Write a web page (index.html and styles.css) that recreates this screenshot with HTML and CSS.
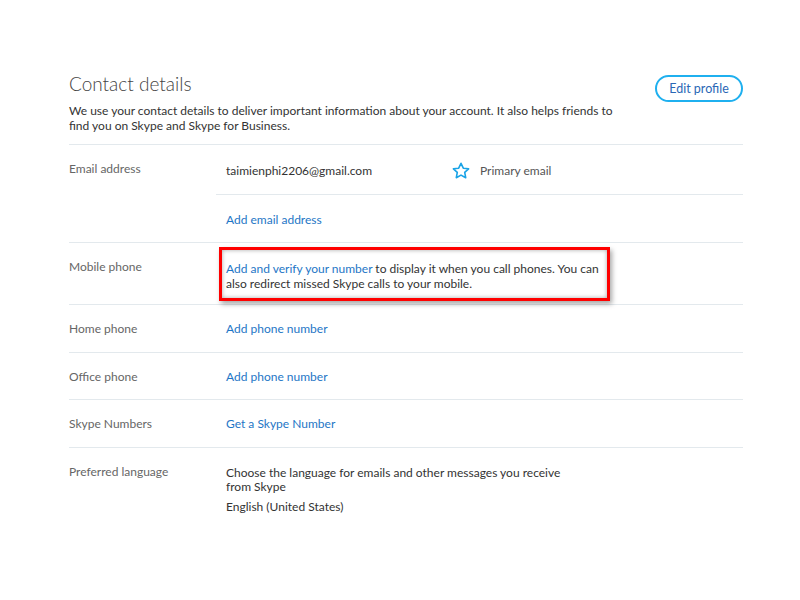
FILE: index.html
```html
<!DOCTYPE html>
<html>
<head>
<meta charset="utf-8">
<link rel="stylesheet" href="styles.css">
</head>
<body>
<main class="page">
  <header class="head">
    <div class="head-text">
      <h1 class="title">Contact details</h1>
      <p class="intro">We use your contact details to deliver important information about your account. It also helps friends to find you on Skype and Skype for Business.</p>
    </div>
    <button class="edit-btn">Edit profile</button>
  </header>

  <section class="row">
    <div class="label">Email address</div>
    <div class="values">
      <div class="sub email-line">
        <span class="email">taimienphi2206@gmail.com</span>
        <span class="primary">
          <svg class="star" width="18" height="17" viewBox="0 0 18 17"><path d="M9 1.3l2.3 4.9 5.3.6-3.9 3.6 1 5.3L9 13.1l-4.7 2.6 1-5.3-3.9-3.6 5.3-.6z" fill="none" stroke="#1aa3e6" stroke-width="1.6" stroke-linejoin="round"/></svg>
          Primary email
        </span>
      </div>
      <div class="sub sub-border"><a class="link">Add email address</a></div>
    </div>
  </section>

  <section class="row">
    <div class="label">Mobile phone</div>
    <div class="values">
      <div class="sub mobile">
        <div class="highlight"><a class="link">Add and verify your number</a> to display it when you call phones. You can also redirect missed Skype calls to your mobile.</div>
      </div>
    </div>
  </section>

  <section class="row">
    <div class="label">Home phone</div>
    <div class="values"><div class="sub"><a class="link">Add phone number</a></div></div>
  </section>

  <section class="row">
    <div class="label">Office phone</div>
    <div class="values"><div class="sub sub-short"><a class="link">Add phone number</a></div></div>
  </section>

  <section class="row">
    <div class="label">Skype Numbers</div>
    <div class="values"><div class="sub"><a class="link">Get a Skype Number</a></div></div>
  </section>

  <section class="row">
    <div class="label">Preferred language</div>
    <div class="values">
      <div class="sub lang">
        <p class="lang-desc">Choose the language for emails and other messages you receive from Skype</p>
        <p class="lang-value">English (United States)</p>
      </div>
    </div>
  </section>
</main>
</body>
</html>
```

FILE: styles.css
```css
* { box-sizing: border-box; }
html, body { margin: 0; padding: 0; background: #fff; }
body {
  font-family: Lato, "Open Sans", sans-serif;
  font-size: 12px;
  color: #333;
}
.page {
  width: 674px;
  margin-left: 69px;
  padding-top: 70px;
}
.head {
  display: flex;
  justify-content: space-between;
  align-items: flex-start;
  padding-bottom: 11px;
}
.title {
  margin: 0;
  padding-top: 1px;
  font-size: 19px;
  font-weight: 300;
  line-height: 26px;
  color: #444;
}
.intro {
  margin: 6px 0 0;
  width: 560px;
  line-height: 15px;
  color: #333;
}
.edit-btn {
  margin-top: 5px;
  width: 88px;
  height: 27px;
  border: 2px solid #1fb0ef;
  border-radius: 14px;
  background: #fff;
  font-family: inherit;
  font-size: 12.5px;
  color: #2a67b5;
  padding: 0;
}
.row {
  display: flex;
  border-top: 1px solid #e3e9ed;
}
.label {
  width: 147px;
  flex: none;
  padding-top: 16px;
  line-height: 16px;
  color: #666;
}
.values { flex: 1; }
.sub {
  padding: 16px 0 15px 10px;
  line-height: 16px;
}
.sub-short { padding-bottom: 14px; }
.sub-border { border-top: 1px solid #e3e9ed; }
.sub-border.sub { padding-top: 17px; padding-bottom: 14px; }
.email-line {
  display: flex;
  align-items: center;
  padding-top: 17px;
  padding-bottom: 15px;
}
.email { width: 226px; color: #333; }
.primary {
  display: flex;
  align-items: center;
  gap: 10px;
  color: #555;
}
.star { display: block; }
.link { color: #1e76c6; text-decoration: none; }
.mobile { padding: 4px 0 3px 3px; }
.highlight {
  width: 391px;
  padding: 11px 2px 7px 4px;
  border: 3px solid #f00;
  line-height: 15px;
  box-shadow: inset 0 0 4px rgba(0,0,0,0.35), 2px 3px 5px rgba(0,0,0,0.35);
}
.lang { padding-top: 18px; }
.lang-desc { margin: 0; width: 360px; line-height: 14px; }
.lang-value { margin: 5px 0 0; line-height: 16px; }
```
